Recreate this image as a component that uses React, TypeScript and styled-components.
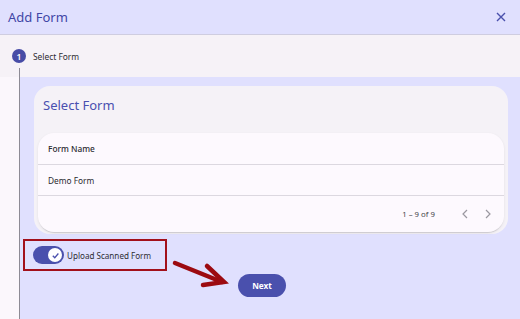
import { createGlobalStyle, styled } from "styled-components";

const GlobalStyle = createGlobalStyle`
  html, body {
    margin: 0;
    padding: 0;
    width: 520px;
    height: 319px;
    overflow: hidden;
    font-family: "Noto Sans", "Open Sans", sans-serif;
  }
  * {
    box-sizing: border-box;
  }
`;

export default function App() {
  return (
    <>
      <GlobalStyle />
      <Dialog>
        <Header>
          <Title>Add Form</Title>
          <CloseButton aria-label="close">
            <svg width="10" height="10" viewBox="0 0 10 10">
              <path d="M1 1L9 9M9 1L1 9" stroke="#4a50ad" strokeWidth="1.4" />
            </svg>
          </CloseButton>
        </Header>

        <Stepper>
          <StepHead>
            <StepCircle>1</StepCircle>
            <StepLabel>Select Form</StepLabel>
          </StepHead>
          <Rail />
          <StepBody>
            <Card>
              <CardTitle>Select Form</CardTitle>
              <Table>
                <Row $head>Form Name</Row>
                <Row>Demo Form</Row>
                <Paginator>
                  <span>1 – 9 of 9</span>
                  <PageNav>
                    <svg width="8" height="10" viewBox="0 0 8 10">
                      <path d="M6 1L2 5L6 9" stroke="#9a98a0" strokeWidth="1.2" fill="none" />
                    </svg>
                    <svg width="8" height="10" viewBox="0 0 8 10">
                      <path d="M2 1L6 5L2 9" stroke="#9a98a0" strokeWidth="1.2" fill="none" />
                    </svg>
                  </PageNav>
                </Paginator>
              </Table>
            </Card>

            <HighlightBox>
              <Toggle>
                <Thumb>
                  <svg width="9" height="9" viewBox="0 0 10 10">
                    <path d="M2 5.2L4.2 7.4L8.2 2.8" stroke="#4a50ad" strokeWidth="1.5" fill="none" />
                  </svg>
                </Thumb>
              </Toggle>
              <ToggleLabel>Upload Scanned Form</ToggleLabel>
            </HighlightBox>

            <NextButton>Next</NextButton>

            <Arrow width="60" height="34" viewBox="0 0 60 34">
              <path d="M3 5L50 24" stroke="#9c0a10" strokeWidth="4.5" strokeLinecap="round" />
              <path d="M35 8L52 24L31 27" stroke="#9c0a10" strokeWidth="4.5" fill="none" strokeLinecap="round" />
            </Arrow>
          </StepBody>
        </Stepper>
      </Dialog>
    </>
  );
}

const Dialog = styled.div`
  width: 520px;
  height: 319px;
  display: flex;
  flex-direction: column;
  background: #fbf7fc;
`;

const Header = styled.div`
  height: 35px;
  flex-shrink: 0;
  display: flex;
  align-items: center;
  justify-content: space-between;
  padding: 0 13px 0 8px;
  background: #e0e0fe;
  border-bottom: 1px solid #cfcde0;
`;

const Title = styled.h1`
  margin: 0;
  font-size: 13px;
  font-weight: 400;
  color: #4046a6;
`;

const CloseButton = styled.div`
  display: flex;
  align-items: center;
  justify-content: center;
  width: 12px;
  height: 12px;
`;

const Stepper = styled.div`
  flex: 1;
  display: grid;
  grid-template-columns: 20px 1fr;
  grid-template-rows: 42px 1fr;
  min-height: 0;
`;

const StepHead = styled.div`
  grid-column: 1 / 3;
  display: flex;
  align-items: center;
  gap: 7px;
  padding: 0 0 0 12px;
  background: #f6f2f7;
`;

const StepCircle = styled.div`
  position: relative;
  width: 14px;
  height: 14px;
  border-radius: 50%;
  background: #474ca6;
  color: #fff;
  font-size: 8.5px;
  font-weight: 600;
  display: flex;
  align-items: center;
  justify-content: center;

  &::after {
    content: "";
    position: absolute;
    left: 7px;
    top: 19px;
    width: 1px;
    height: 10px;
    background: #8d8b95;
  }
`;

const StepLabel = styled.span`
  font-size: 8.4px;
  color: #2e2d33;
`;

const Rail = styled.div`
  border-right: 1px solid #8d8b95;
  background: #fbf7fc;
`;

const StepBody = styled.div`
  position: relative;
  background: #e0e0fe;
  padding: 9px 12px 0 14px;
  display: flex;
  flex-direction: column;
  align-items: flex-start;
`;

const Card = styled.div`
  width: 100%;
  background: #f5f2f7;
  border-radius: 16px;
  padding: 0 4px 2px;
`;

const CardTitle = styled.h2`
  margin: 0;
  height: 38px;
  display: flex;
  align-items: center;
  padding: 0 0 0 5px;
  font-size: 13px;
  font-weight: 400;
  color: #4a50b0;
`;

const Table = styled.div`
  margin-top: 9px;
  background: #fdf9fe;
  border-radius: 16px;
  box-shadow: 0 2px 1px -1px rgba(0, 0, 0, 0.12), 0 1px 3px rgba(0, 0, 0, 0.08);
`;

const Row = styled.div<{ $head?: boolean }>`
  height: ${(p) => (p.$head ? "32px" : "31px")};
  display: flex;
  align-items: center;
  padding: 0 10px;
  font-size: 8.3px;
  font-weight: ${(p) => (p.$head ? 500 : 400)};
  color: #2b2a30;
  border-bottom: 1px solid #dcd8e0;
`;

const Paginator = styled.div`
  height: 36px;
  display: flex;
  align-items: center;
  justify-content: flex-end;
  padding: 0 12px 0 0;
  font-size: 7.8px;
  color: #46454b;
  gap: 26px;
`;

const PageNav = styled.div`
  display: flex;
  align-items: center;
  gap: 15px;
`;

const HighlightBox = styled.div`
  margin: 5px 0 0 -11px;
  width: 144px;
  height: 32px;
  border: 2px solid #a2101b;
  display: flex;
  align-items: center;
  padding-left: 8px;
  gap: 3px;
`;

const Toggle = styled.div`
  width: 31px;
  height: 18px;
  border-radius: 9px;
  background: #4a50ad;
  display: flex;
  align-items: center;
  justify-content: flex-end;
  padding-right: 2px;
  flex-shrink: 0;
`;

const Thumb = styled.div`
  width: 14px;
  height: 14px;
  border-radius: 50%;
  background: #fff;
  display: flex;
  align-items: center;
  justify-content: center;
`;

const ToggleLabel = styled.span`
  font-size: 8.1px;
  color: #2e2d33;
  white-space: nowrap;
`;

const NextButton = styled.button`
  margin: 3px 0 0 204px;
  width: 48px;
  height: 23px;
  border: none;
  border-radius: 12px;
  background: #4a50ad;
  color: #fff;
  font-family: "Noto Sans", sans-serif;
  font-size: 8.2px;
  font-weight: 700;
  padding: 0;
`;

const Arrow = styled.svg`
  position: absolute;
  left: 152px;
  top: 181px;
`;
